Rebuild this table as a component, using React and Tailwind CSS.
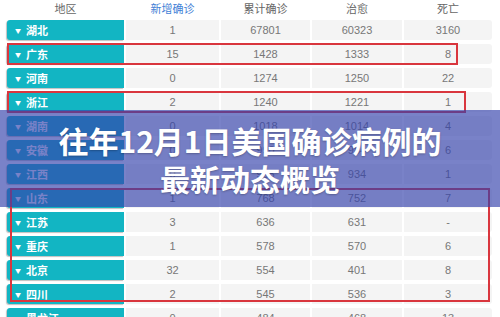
import React from 'react';

const rows = [
  { name: '湖北', add: '1', total: '67801', cured: '60323', dead: '3160' },
  { name: '广东', add: '15', total: '1428', cured: '1333', dead: '8' },
  { name: '河南', add: '0', total: '1274', cured: '1250', dead: '22' },
  { name: '浙江', add: '2', total: '1240', cured: '1221', dead: '1' },
  { name: '湖南', add: '0', total: '1018', cured: '1014', dead: '4' },
  { name: '安徽', add: '0', total: '990', cured: '984', dead: '6' },
  { name: '江西', add: '0', total: '935', cured: '934', dead: '1' },
  { name: '山东', add: '1', total: '768', cured: '752', dead: '7' },
  { name: '江苏', add: '3', total: '636', cured: '631', dead: '-' },
  { name: '重庆', add: '1', total: '578', cured: '570', dead: '6' },
  { name: '北京', add: '32', total: '554', cured: '401', dead: '8' },
  { name: '四川', add: '2', total: '545', cured: '536', dead: '3' },
  { name: '黑龙江', add: '0', total: '484', cured: '468', dead: '13' },
];

const cols = 'grid grid-cols-[117px_93px_89px_90px_88px] gap-x-[2px]';

export default function App() {
  return (
    <div className="relative w-[500px] h-[317px] overflow-hidden bg-white font-['Liberation_Sans','Noto_Sans_CJK_SC',sans-serif]">
      <div className="pl-[7px]">
        {/* header */}
        <div className={`${cols} h-[20px] items-center text-[11px] text-[#666] pb-[2px]`}>
          <div className="text-center">地区</div>
          <div className="text-center text-[#3f7fd6]">新增确诊</div>
          <div className="text-center">累计确诊</div>
          <div className="text-center">治愈</div>
          <div className="text-center">死亡</div>
        </div>

        {/* rows */}
        <div className="flex flex-col gap-[4px]">
          {rows.map(r => (
            <div key={r.name} className={`${cols} h-[20px] text-[11px] text-[#777]`}>
              <div className="flex items-center gap-[5px] pl-[8px] bg-[#12b5c3] rounded-l-[3px] shadow-[-1px_1px_1px_rgba(0,0,0,0.25)] text-white font-bold text-[11px] font-['Noto_Sans_CJK_SC',sans-serif]">
                <span className="text-[6px]">▼</span>
                <span>{r.name}</span>
              </div>
              <div className="flex items-center justify-center bg-[#f4f4f4]">{r.add}</div>
              <div className="flex items-center justify-center bg-[#f4f4f4]">{r.total}</div>
              <div className="flex items-center justify-center bg-[#f4f4f4]">{r.cured}</div>
              <div className="flex items-center justify-center bg-[#f4f4f4] rounded-r-[3px]">{r.dead}</div>
            </div>
          ))}
        </div>
      </div>

      {/* red annotation boxes */}
      <div className="absolute left-[7px] top-[43px] w-[451px] h-[22px] border-2 border-[#d9363e]" />
      <div className="absolute left-[7px] top-[91px] w-[459px] h-[22px] border-2 border-[#d9363e]" />
      <div className="absolute left-[10px] top-[188px] w-[480px] h-[114px] border-2 border-[#d9363e]" />

      {/* title overlay */}
      <div className="absolute left-0 right-0 top-[110px] h-[97px] bg-[rgba(52,66,172,0.66)] flex flex-col items-center justify-center">
        <div className="text-white font-bold text-[30px] leading-[38px] text-center font-['Noto_Sans_CJK_SC',sans-serif] [text-shadow:0_1px_2px_rgba(0,0,0,0.25)]">
          <div>往年12月1日美国确诊病例的</div>
          <div>最新动态概览</div>
        </div>
      </div>
    </div>
  );
}
